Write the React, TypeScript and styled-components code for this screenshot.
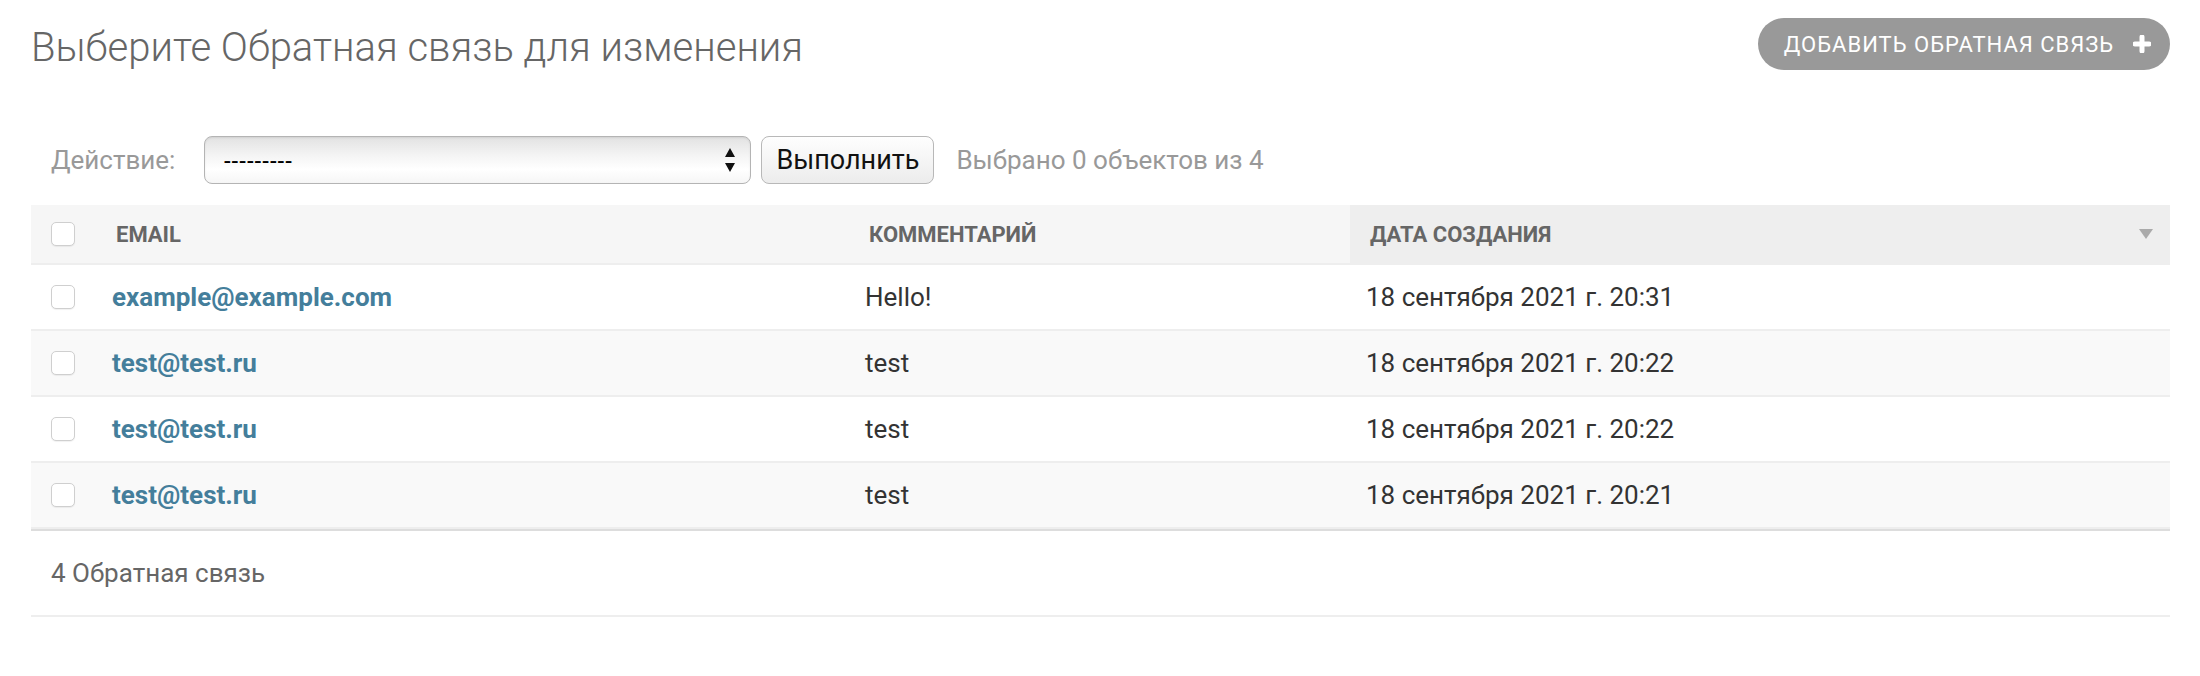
import React from 'react'
import styled, { createGlobalStyle } from 'styled-components'

const GlobalStyle = createGlobalStyle`
  html, body {
    margin: 0;
    padding: 0;
    background: #fff;
  }
  body {
    font-family: Roboto, 'Liberation Sans', sans-serif;
    color: #333;
  }
  * {
    box-sizing: border-box;
  }
`

const Content = styled.div`
  padding: 18px 30px 40px 31px;
`

const Header = styled.div`
  display: flex;
  justify-content: space-between;
  align-items: flex-start;
`

const Title = styled.h1`
  margin: 6px 0 0;
  font-size: 40px;
  line-height: 48px;
  font-weight: 300;
  color: #666;
`

const AddButton = styled.a`
  display: flex;
  align-items: center;
  gap: 19px;
  height: 52px;
  padding: 0 19px 0 26px;
  border-radius: 26px;
  background: #999;
  color: #fff;
  font-size: 22px;
  letter-spacing: 1px;
  text-transform: uppercase;
  text-decoration: none;
  white-space: nowrap;
`

const Actions = styled.div`
  display: flex;
  align-items: center;
  height: 48px;
  margin-top: 64px;
  padding-left: 20px;
`

const ActionLabel = styled.span`
  font-size: 26px;
  color: #999;
  margin-right: 29px;
`

const Select = styled.div`
  display: flex;
  align-items: center;
  justify-content: space-between;
  width: 547px;
  height: 48px;
  padding: 0 14px 0 18px;
  border: 1px solid #b4b4b4;
  border-radius: 8px;
  background: linear-gradient(#e2e2e2 0%, #f4f4f4 40%, #fff 70%, #f6f6f6 100%);
  box-shadow: inset 0 1px 2px rgba(0, 0, 0, 0.08);
  font-family: 'Liberation Sans', sans-serif;
  font-size: 23px;
  color: #000;
`

const RunButton = styled.button`
  width: 173px;
  height: 48px;
  margin-left: 10px;
  padding: 0;
  border: 1px solid #b8b8b8;
  border-radius: 8px;
  background: linear-gradient(#fefefe, #ececec);
  font-family: Roboto, sans-serif;
  font-size: 27px;
  color: #111;
`

const Counter = styled.span`
  margin-left: 22px;
  font-size: 26px;
  color: #999;
`

const Table = styled.table`
  width: 100%;
  margin-top: 21px;
  border-collapse: collapse;
  table-layout: fixed;
`

const HeadCell = styled.th<{ $sorted?: boolean; $check?: boolean }>`
  height: 59px;
  padding: ${p => (p.$check ? '0 0 0 20px' : '0 17px 0 20px')};
  background: ${p => (p.$sorted ? '#eee' : '#f6f6f6')};
  border-bottom: 2px solid #eee;
  text-align: left;
  vertical-align: middle;
  font-size: 22px;
  font-weight: 700;
  color: #666;
  text-transform: uppercase;
  white-space: nowrap;
`

const SortHead = styled.div`
  display: flex;
  align-items: center;
  justify-content: space-between;
`

const Row = styled.tr<{ $alt: boolean }>`
  background: ${p => (p.$alt ? '#f9f9f9' : '#fff')};
`

const Cell = styled.td<{ $check?: boolean }>`
  padding: ${p => (p.$check ? '0 0 0 20px' : '16px')};
  line-height: 32px;
  font-size: 26px;
  color: #333;
  border-bottom: 2px solid #eee;
  vertical-align: middle;
`

const EmailLink = styled.a`
  color: #447e9b;
  font-weight: 700;
  text-decoration: none;
`

const Checkbox = styled.span`
  display: block;
  width: 24px;
  height: 24px;
  border: 1px solid #cfcfcf;
  border-radius: 5px;
  background: #fff;
  box-shadow: 0 1px 1px rgba(0, 0, 0, 0.06);
`

const Paginator = styled.p`
  margin: 0;
  padding: 20px;
  line-height: 44px;
  font-size: 26px;
  color: #666;
  border-top: 2px solid #ddd;
  border-bottom: 2px solid #eee;
`

const PlusIcon = () => (
  <svg width="18" height="18" viewBox="0 0 18 18">
    <path d="M9 2v14M2 9h14" stroke="#fff" strokeWidth="5" strokeLinecap="round" />
  </svg>
)

const SelectArrows = () => (
  <svg width="12" height="26" viewBox="0 0 12 26">
    <path d="M6 1L11 10H1Z M6 25L11 16H1Z" fill="#111" />
  </svg>
)

const SortArrow = () => (
  <svg width="14" height="10" viewBox="0 0 14 10">
    <path d="M0 0H14L7 10Z" fill="#aaa" />
  </svg>
)

const rows = [
  { email: 'example@example.com', comment: 'Hello!', date: '18 сентября 2021 г. 20:31' },
  { email: 'test@test.ru', comment: 'test', date: '18 сентября 2021 г. 20:22' },
  { email: 'test@test.ru', comment: 'test', date: '18 сентября 2021 г. 20:22' },
  { email: 'test@test.ru', comment: 'test', date: '18 сентября 2021 г. 20:21' },
]

const App = () => {
  return (
    <>
      <GlobalStyle />
      <Content>
        <Header>
          <Title>Выберите Обратная связь для изменения</Title>
          <AddButton href="#">
            Добавить Обратная связь
            <PlusIcon />
          </AddButton>
        </Header>

        <Actions>
          <ActionLabel>Действие:</ActionLabel>
          <Select>
            <span>---------</span>
            <SelectArrows />
          </Select>
          <RunButton>Выполнить</RunButton>
          <Counter>Выбрано 0 объектов из 4</Counter>
        </Actions>

        <Table>
          <colgroup>
            <col style={{ width: 65 }} />
            <col style={{ width: 753 }} />
            <col style={{ width: 501 }} />
            <col />
          </colgroup>
          <thead>
            <tr>
              <HeadCell $check><Checkbox /></HeadCell>
              <HeadCell>Email</HeadCell>
              <HeadCell>Комментарий</HeadCell>
              <HeadCell $sorted>
                <SortHead>
                  <span>Дата создания</span>
                  <SortArrow />
                </SortHead>
              </HeadCell>
            </tr>
          </thead>
          <tbody>
            {rows.map((r, i) => (
              <Row key={i} $alt={i % 2 === 1}>
                <Cell $check><Checkbox /></Cell>
                <Cell><EmailLink href="#">{r.email}</EmailLink></Cell>
                <Cell>{r.comment}</Cell>
                <Cell>{r.date}</Cell>
              </Row>
            ))}
          </tbody>
        </Table>

        <Paginator>4 Обратная связь</Paginator>
      </Content>
    </>
  )
}

export default App
